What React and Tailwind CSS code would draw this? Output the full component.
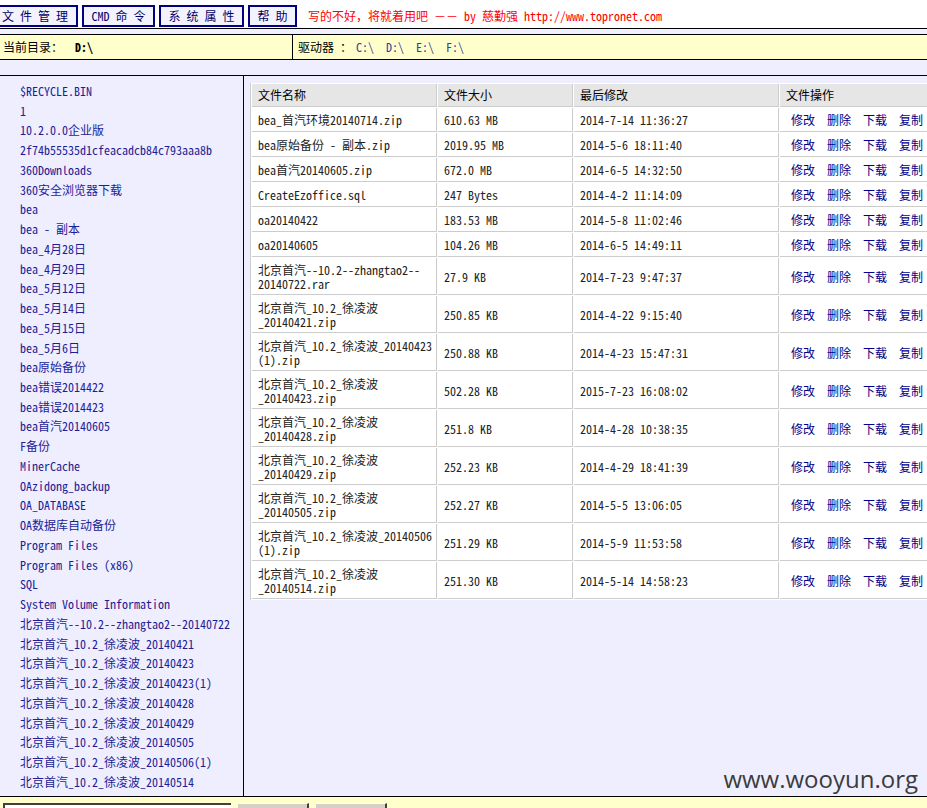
const FONT = { fontFamily: '"Noto Sans Mono CJK SC", "Liberation Mono", "Noto Sans CJK SC", monospace' };

const dirs = [
  '$RECYCLE.BIN', '1', '10.2.0.0企业版', '2f74b55535d1cfeacadcb84c793aaa8b', '360Downloads',
  '360安全浏览器下载', 'bea', 'bea - 副本', 'bea_4月28日', 'bea_4月29日', 'bea_5月12日',
  'bea_5月14日', 'bea_5月15日', 'bea_5月6日', 'bea原始备份', 'bea错误2014422', 'bea错误2014423',
  'bea首汽20140605', 'F备份', 'MinerCache', 'OAzidong_backup', 'OA_DATABASE', 'OA数据库自动备份',
  'Program Files', 'Program Files (x86)', 'SQL', 'System Volume Information',
  '北京首汽--10.2--zhangtao2--20140722', '北京首汽_10.2_徐凌波_20140421', '北京首汽_10.2_徐凌波_20140423',
  '北京首汽_10.2_徐凌波_20140423(1)', '北京首汽_10.2_徐凌波_20140428', '北京首汽_10.2_徐凌波_20140429',
  '北京首汽_10.2_徐凌波_20140505', '北京首汽_10.2_徐凌波_20140506(1)', '北京首汽_10.2_徐凌波_20140514',
];

const files = [
  [['bea_首汽环境20140714.zip'], '610.63 MB', '2014-7-14 11:36:27'],
  [['bea原始备份 - 副本.zip'], '2019.95 MB', '2014-5-6 18:11:40'],
  [['bea首汽20140605.zip'], '672.0 MB', '2014-6-5 14:32:50'],
  [['CreateEzoffice.sql'], '247 Bytes', '2014-4-2 11:14:09'],
  [['oa20140422'], '183.53 MB', '2014-5-8 11:02:46'],
  [['oa20140605'], '104.26 MB', '2014-6-5 14:49:11'],
  [['北京首汽--10.2--zhangtao2--', '20140722.rar'], '27.9 KB', '2014-7-23 9:47:37'],
  [['北京首汽_10.2_徐凌波', '_20140421.zip'], '250.85 KB', '2014-4-22 9:15:40'],
  [['北京首汽_10.2_徐凌波_20140423', '(1).zip'], '250.88 KB', '2014-4-23 15:47:31'],
  [['北京首汽_10.2_徐凌波', '_20140423.zip'], '502.28 KB', '2015-7-23 16:08:02'],
  [['北京首汽_10.2_徐凌波', '_20140428.zip'], '251.8 KB', '2014-4-28 10:38:35'],
  [['北京首汽_10.2_徐凌波', '_20140429.zip'], '252.23 KB', '2014-4-29 18:41:39'],
  [['北京首汽_10.2_徐凌波', '_20140505.zip'], '252.27 KB', '2014-5-5 13:06:05'],
  [['北京首汽_10.2_徐凌波_20140506', '(1).zip'], '251.29 KB', '2014-5-9 11:53:58'],
  [['北京首汽_10.2_徐凌波', '_20140514.zip'], '251.30 KB', '2014-5-14 14:58:23'],
];

const TopButton = ({ label, className = '' }) => (
  <div className={`h-[22px] border-2 border-[#000080] bg-[#f3f3ff] text-[#000066] flex items-center justify-center whitespace-pre ${className}`}>
    {label}
  </div>
);

const cell = 'border-r border-b border-[#cccccc] px-[6px] leading-[14px] align-middle text-left font-normal';

export default function App() {
  return (
    <div className="relative w-[927px] h-[808px] overflow-hidden bg-white text-[12px] text-black" style={FONT}>
      {/* top menu */}
      <div className="h-[28px] flex items-start pt-[5px] gap-[4px]">
        <TopButton label="文 件 管 理" className="w-[86px] -ml-[8px]" />
        <TopButton label="CMD 命 令" className="w-[73px]" />
        <TopButton label="系 统 属 性" className="w-[85px]" />
        <TopButton label="帮 助" className="w-[49px]" />
        <div className="ml-[7px] h-[22px] flex items-center text-[#ff0000] whitespace-pre">
          写的不好，将就着用吧 －－ by 慈勤强 http://www.topronet.com
        </div>
      </div>
      <div className="border-t border-black h-[6px] bg-[#f0f0ff]" />
      <div className="border-t border-b border-black h-[26px] bg-[#ffffcc] flex">
        <div className="w-[293px] border-r border-black flex items-center pl-[3px] whitespace-pre">
          当前目录： <span className="font-bold ml-[6px]">D:\</span>
        </div>
        <div className="flex items-center pl-[5px] whitespace-pre">
          驱动器 ：<span className="text-[#3a3a9e] ml-[4px]">C:\</span>
          <span className="text-[#3a3a9e] ml-[12px]">D:\</span>
          <span className="text-[#3a3a9e] ml-[12px]">E:\</span>
          <span className="text-[#3a3a9e] ml-[12px]">F:\</span>
        </div>
      </div>
      <div className="h-[16px] bg-[#eeeeff] border-b border-black" />

      {/* main */}
      <div className="flex h-[721px] bg-[#eeeeff] border-b border-black">
        <div className="w-[244px] shrink-0 border-r border-black pl-[20px] pt-[5px] text-[#1d1d96]">
          {dirs.map((d) => (
            <div key={d} className="h-[19.74px] leading-[19.74px] whitespace-pre">{d}</div>
          ))}
        </div>
        <div className="flex-1 min-w-0 pl-[6px] pt-[7px]">
          <table className="table-fixed w-[708px] border-separate border-spacing-[1px] bg-white border-l border-[#cccccc] text-[#222]">
            <thead>
              <tr className="bg-[#e6e6e6] text-black">
                <th className={`${cell} py-[4px] w-[185px]`}>文件名称</th>
                <th className={`${cell} py-[4px] w-[135px]`}>文件大小</th>
                <th className={`${cell} py-[4px] w-[205px]`}>最后修改</th>
                <th className={`${cell} py-[4px] w-[178px]`}>文件操作</th>
              </tr>
            </thead>
            <tbody>
              {files.map(([name, size, date], i) => {
                const pad = name.length > 1 ? 'pt-[5px] pb-[3px]' : 'pt-[5px] pb-[4px]';
                return (
                  <tr key={i}>
                    <td className={`${cell} ${pad} whitespace-pre`}>
                      {name.map((n, j) => (
                        <div key={j}>{n}</div>
                      ))}
                    </td>
                    <td className={`${cell} ${pad}`}>{size}</td>
                    <td className={`${cell} ${pad}`}>{date}</td>
                    <td className={`${cell} ${pad} pl-[11px] text-[#000088]`}>
                      <div className="flex gap-[12px] whitespace-pre">
                        <span>修改</span><span>删除</span><span>下载</span><span>复制</span>
                      </div>
                    </td>
                  </tr>
                );
              })}
            </tbody>
          </table>
        </div>
      </div>

      {/* bottom bar */}
      <div className="h-[20px] bg-[#ffffcc] flex items-start pt-[6px] pl-[3px]">
        <div className="w-[228px] h-[20px] bg-white border-t-2 border-l-2 border-[#404040]" />
        <div className="ml-[7px] w-[71px] h-[20px] bg-[#d4d0c8] border-r-2 border-[#404040] border-t border-t-white flex justify-center pt-[2px] text-black">新建文件</div>
        <div className="ml-[7px] w-[71px] h-[20px] bg-[#d4d0c8] border-r-2 border-[#404040] border-t border-t-white flex justify-center pt-[2px] text-black">新建目录</div>
      </div>

      <div
        className="absolute right-[9px] top-[761px] text-[24px] text-[#3c3c3c]"
        style={{ fontFamily: '"Open Sans", "Noto Sans", sans-serif' }}
      >
        www.wooyun.org
      </div>
    </div>
  );
}
